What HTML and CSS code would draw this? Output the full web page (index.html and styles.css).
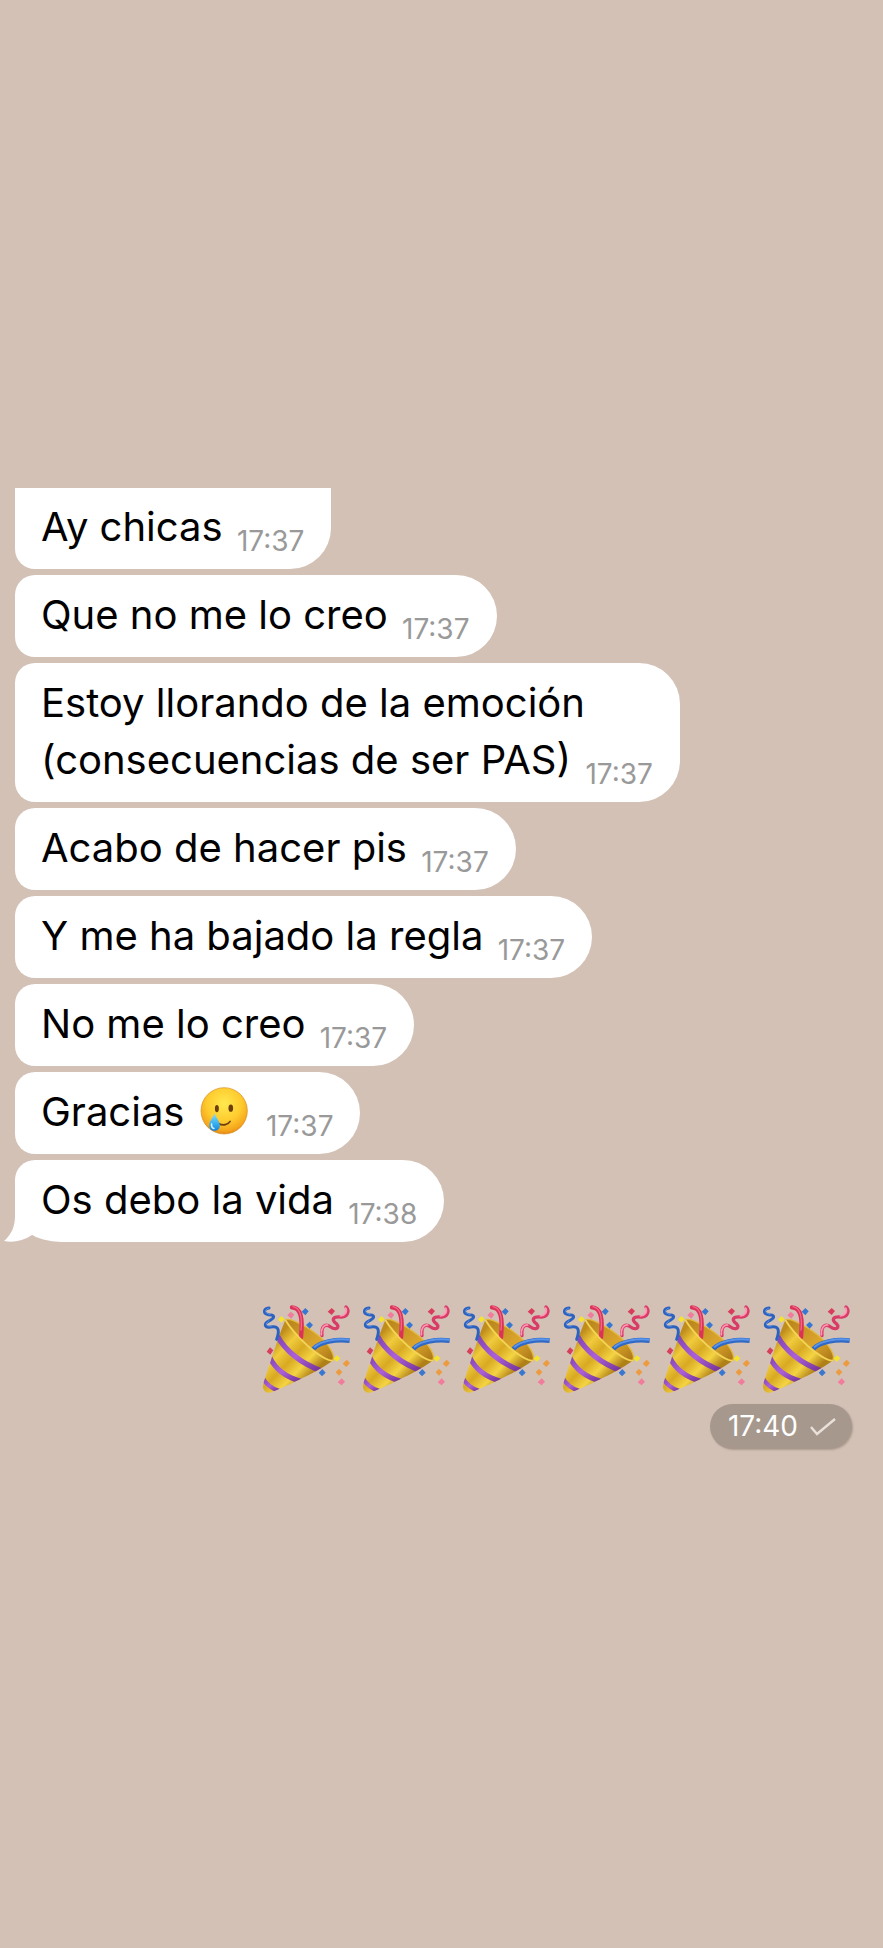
FILE: index.html
```
<!DOCTYPE html>
<html lang="es">
<head>
    <meta charset="UTF-8">
    <meta name="viewport" content="width=device-width, initial-scale=1.0">
    <title>Chat</title>
    <link rel="stylesheet" href="styles.css">
</head>
<body>
<!-- Party popper, drawn once and reused -->
<svg class="defs" aria-hidden="true">
    <defs>
        <linearGradient id="gold" x1="0.1" y1="0.35" x2="0.6" y2="0.85">
            <stop offset="0" stop-color="#c08d1c"/>
            <stop offset="0.25" stop-color="#f0cb3c"/>
            <stop offset="0.5" stop-color="#d8a922"/>
            <stop offset="0.75" stop-color="#f4d443"/>
            <stop offset="1" stop-color="#b08018"/>
        </linearGradient>
        <linearGradient id="inside" x1="0" y1="0" x2="1" y2="1">
            <stop offset="0" stop-color="#b5821c"/>
            <stop offset="0.6" stop-color="#dba52c"/>
            <stop offset="1" stop-color="#a87416"/>
        </linearGradient>
        <linearGradient id="purple" x1="0" y1="0" x2="1" y2="1">
            <stop offset="0" stop-color="#8144b4"/>
            <stop offset="0.5" stop-color="#ac60d8"/>
            <stop offset="1" stop-color="#6f2f93"/>
        </linearGradient>
        <clipPath id="cone">
            <path d="M93 73C80 96 44 210 25 268C22 284 36 296 50 291C100 270 196 225 234 196C222 196 188 176 158 149C130 122 104 94 93 73Z"/>
        </clipPath>
        <symbol id="popper" viewBox="22 26 270 270">
            <path d="M93 73C106 68 150 88 188 118C222 145 244 180 234 196C222 196 188 176 158 149C130 122 104 94 93 73Z" fill="url(#inside)" stroke="#e3b83a" stroke-width="4" stroke-linejoin="round"/>
            <path d="M112 36C138 37 145 66 139 126" fill="none" stroke="#dc3158" stroke-width="13" stroke-linecap="round"/>
            <path d="M115 34C136 38 143 64 139 104" fill="none" stroke="#f4688a" stroke-width="4" stroke-linecap="round"/>
            <path d="M176 161C196 140 242 131 285 136" fill="none" stroke="#3269c4" stroke-width="14"/>
            <path d="M178 156C198 137 242 129 285 133" fill="none" stroke="#5b95ea" stroke-width="6"/>
            <path d="M93 73C80 96 44 210 25 268C22 284 36 296 50 291C100 270 196 225 234 196C222 196 188 176 158 149C130 122 104 94 93 73Z" fill="url(#gold)"/>
            <g clip-path="url(#cone)" fill="none" stroke="url(#purple)">
                <path d="M68 122C92 166 140 206 204 228" stroke-width="16"/>
                <path d="M44 184C62 222 92 246 140 258" stroke-width="15"/>
                <path d="M24 248C36 270 50 280 76 288" stroke-width="13"/>
            </g>
            <path d="M93 75C104 96 130 124 158 151C188 178 220 197 233 196" fill="none" stroke="#f3d455" stroke-width="5" stroke-linecap="round"/>
            <path d="M43 38C25 40 25 56 42 58C61 58 61 67 46 75C25 85 29 98 48 95C70 91 77 102 66 132" fill="none" stroke="#2c62bf" stroke-width="9" stroke-linecap="round" stroke-linejoin="round"/>
            <path d="M41 39C27 44 31 55 46 57M43 76C29 86 34 94 50 92" fill="none" stroke="#5c92e6" stroke-width="3" stroke-linecap="round"/>
            <path d="M274 35C286 47 278 66 259 65C235 63 229 72 245 85C258 98 241 105 228 95C210 82 199 95 202 121" fill="none" stroke="#d93c66" stroke-width="10" stroke-linecap="round" stroke-linejoin="round"/>
            <path d="M273 38C279 49 272 61 257 62M200 118C199 98 209 87 219 89" fill="none" stroke="#ff98b5" stroke-width="5" stroke-linecap="round"/>
            <g fill="#3978d0">
                <path d="M152 38l10 10-10 12-11-11zM165 79l10 10-10 11-11-11zM203 221l10 11-11 11-10-11z"/>
            </g>
            <g fill="#f17c9b">
                <path d="M108 49l11 9-9 12-12-10zM261 249l10 10-10 11-12-9z"/>
            </g>
            <g fill="#d83e5c">
                <path d="M231 38l10 9-10 12-12-10zM46 156l10 9-9 13-11-9z"/>
            </g>
            <g fill="#f6e32d">
                <path d="M80 62l10 9-9 11-11-9zM247 180l10 9-10 10-11-9z"/>
            </g>
            <g fill="#ec9b3e">
                <path d="M276 193l10 10-11 12-11-10zM253 220l10 10-10 11-10-10z"/>
            </g>
        </symbol>
    </defs>
</svg>

<main class="chat">
    <div class="messages">
        <p class="bubble cut">Ay chicas <time class="time">17:37</time></p>
        <p class="bubble">Que no me lo creo <time class="time">17:37</time></p>
        <p class="bubble">Estoy llorando de la emoción<br>(consecuencias de ser PAS) <time class="time">17:37</time></p>
        <p class="bubble">Acabo de hacer pis <time class="time">17:37</time></p>
        <p class="bubble">Y me ha bajado la regla <time class="time">17:37</time></p>
        <p class="bubble">No me lo creo <time class="time">17:37</time></p>
        <p class="bubble">Gracias
            <svg class="face" viewBox="60 76 145 145" role="img" aria-label="Cara sonriente con lágrima">
                <defs>
                    <radialGradient id="skin" cx="0.5" cy="0.35" r="0.68">
                        <stop offset="0" stop-color="#ffe94f"/>
                        <stop offset="0.55" stop-color="#fecb2e"/>
                        <stop offset="0.85" stop-color="#f5a51c"/>
                        <stop offset="1" stop-color="#dc7b15"/>
                    </radialGradient>
                    <linearGradient id="tear" x1="0" y1="0" x2="0" y2="1">
                        <stop offset="0" stop-color="#8bdcfb"/>
                        <stop offset="0.6" stop-color="#37aeee"/>
                        <stop offset="1" stop-color="#1684d8"/>
                    </linearGradient>
                </defs>
                <circle cx="133" cy="148" r="70" fill="url(#skin)" stroke="#d48a1b" stroke-width="2"/>
                <ellipse cx="111" cy="141" rx="6" ry="11" fill="#6c3e0c"/>
                <ellipse cx="153" cy="140" rx="7" ry="11" fill="#6c3e0c"/>
                <path d="M116 186C130 194 145 190 151 180" fill="none" stroke="#6c3e0c" stroke-width="5" stroke-linecap="round"/>
                <path d="M104 156C98 171 88 179 88 192C88 202 95 208 104 208C113 208 120 202 120 192C120 179 109 171 104 156Z" fill="url(#tear)"/>
                <path d="M95 188C94 197 98 201 102 201" fill="none" stroke="#d4f3ff" stroke-width="5" stroke-linecap="round"/>
            </svg>
            <time class="time">17:37</time></p>
        <p class="bubble last">Os debo la vida <time class="time">17:38</time>
            <svg class="tail" viewBox="0 0 28 32" aria-hidden="true">
                <path d="M11 0H28V25C19 31 9 33 0 31C7 25 11 17 11 6Z" fill="#fff"/>
            </svg>
        </p>
    </div>

    <div class="sent">
        <div class="poppers" role="img" aria-label="Confeti">
            <svg class="popper"><use href="#popper"/></svg>
            <svg class="popper"><use href="#popper"/></svg>
            <svg class="popper"><use href="#popper"/></svg>
            <svg class="popper"><use href="#popper"/></svg>
            <svg class="popper"><use href="#popper"/></svg>
            <svg class="popper"><use href="#popper"/></svg>
        </div>
        <div class="status">
            <time>17:40</time>
            <svg class="check" viewBox="0 0 28 20" aria-label="Enviado">
                <path d="M2 10L8 17L26 2" fill="none" stroke="#e9e0d9" stroke-width="2.4"/>
            </svg>
        </div>
    </div>
</main>
</body>
</html>
```
FILE: styles.css
```
body {
    margin: 0;
    min-height: 100vh;
    background-color: #d3c1b6;
    font-family: Inter, "Liberation Sans", sans-serif;
    color: #000;
}
.defs {
    position: absolute;
    width: 0;
    height: 0;
}
.chat {
    padding: 488px 31px 40px 15px;
}
.messages {
    display: flex;
    flex-direction: column;
    align-items: flex-start;
    gap: 6px;
}
.bubble {
    margin: 0;
    padding: 11px 27px 14px 26px;
    background-color: #fff;
    border-radius: 20px 41px 41px 20px;
    font-size: 40px;
    line-height: 57px;
}
.bubble.cut {
    padding-top: 10px;
    border-top-left-radius: 0;
    border-top-right-radius: 0;
}
.bubble.last {
    position: relative;
    border-bottom-left-radius: 46px 32px;
}
.time {
    margin-left: 3px;
    font-size: 28px;
    line-height: 20px;
    color: #999;
    vertical-align: -10px;
}
.face {
    width: 48px;
    height: 48px;
    margin: 0 4px;
    vertical-align: -9px;
}
.tail {
    position: absolute;
    left: -11px;
    bottom: 0;
    width: 28px;
    height: 32px;
}
.sent {
    display: flex;
    flex-direction: column;
    align-items: flex-end;
    gap: 10px;
    margin-top: 62px;
}
.poppers {
    display: flex;
    flex-wrap: wrap;
    justify-content: flex-end;
    gap: 10px;
}
.popper {
    width: 90px;
    height: 90px;
}
.status {
    display: flex;
    align-items: center;
    gap: 11px;
    padding: 0 15px 0 18px;
    border-radius: 23px;
    background-color: #a6988d;
    box-shadow: 1px 1px 2px rgba(120, 100, 90, 0.4);
    color: #fff;
    font-size: 28px;
    line-height: 45px;
}
.check {
    width: 28px;
    height: 20px;
}
```
